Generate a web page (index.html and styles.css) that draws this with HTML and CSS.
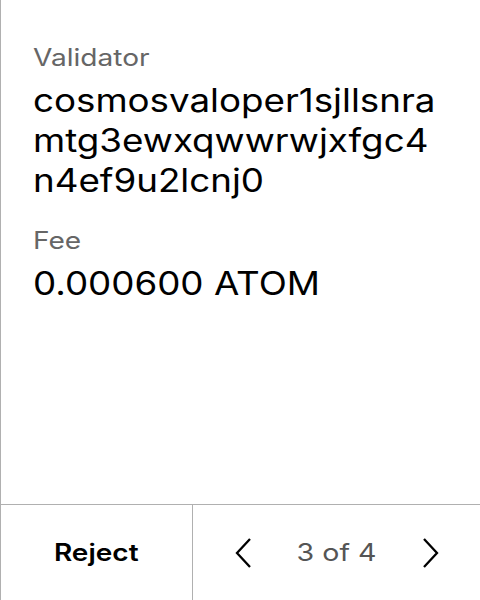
FILE: index.html
```html
<!DOCTYPE html>
<html>
<head>
<meta charset="utf-8">
<link rel="stylesheet" href="styles.css">
</head>
<body>
<div class="screen">
  <main class="content">
    <section class="field">
      <div class="label">Validator</div>
      <div class="value">cosmosvaloper1sjllsnra<br>mtg3ewxqwwrwjxfgc4<br>n4ef9u2lcnj0</div>
    </section>
    <section class="field">
      <div class="label">Fee</div>
      <div class="value">0.000600 ATOM</div>
    </section>
  </main>
  <footer class="footer">
    <div class="reject"><span class="reject-text">Reject</span></div>
    <div class="pager">
      <svg class="chev" width="20" height="32" viewBox="0 0 20 32"><path d="M16 2 L3 16 L16 30" fill="none" stroke="#000" stroke-width="2.3"/></svg>
      <span class="count">3 of 4</span>
      <svg class="chev" width="20" height="32" viewBox="0 0 20 32"><path d="M4 2 L17 16 L4 30" fill="none" stroke="#000" stroke-width="2.3"/></svg>
    </div>
  </footer>
</div>
</body>
</html>
```
FILE: styles.css
```css
html, body {
  margin: 0;
  padding: 0;
  background: #fff;
}
body {
  font-family: Inter, "Noto Sans", sans-serif;
  color: #000;
}
.screen {
  width: 480px;
  height: 600px;
  box-sizing: border-box;
  border-left: 1px solid #b0b0b0;
  display: flex;
  flex-direction: column;
  overflow: hidden;
}
.content {
  flex: 1;
  padding: 42px 0 0 32px;
  display: flex;
  flex-direction: column;
  gap: 24px;
}
.field {
  display: flex;
  flex-direction: column;
  align-items: flex-start;
  gap: 7px;
}
.label {
  font-size: 24px;
  line-height: 32px;
  color: #666;
  transform: scaleX(1.17);
  transform-origin: left center;
}
.value {
  font-size: 32px;
  line-height: 40px;
  white-space: nowrap;
  transform: scaleX(1.148);
  transform-origin: left center;
}
.footer {
  height: 95px;
  border-top: 1px solid #b0b0b0;
  display: flex;
}
.reject {
  width: 191px;
  border-right: 1px solid #b0b0b0;
  display: flex;
  align-items: center;
  justify-content: center;
  font-size: 24px;
  font-weight: 600;
}
.reject-text {
  display: inline-block;
  transform: scaleX(1.167);
}
.pager {
  flex: 1;
  display: flex;
  align-items: center;
  justify-content: space-between;
  padding: 0 40px 0 41px;
}
.count {
  display: inline-block;
  font-size: 24px;
  color: #555;
  transform: scaleX(1.19);
}
.chev { display: block; }
```
